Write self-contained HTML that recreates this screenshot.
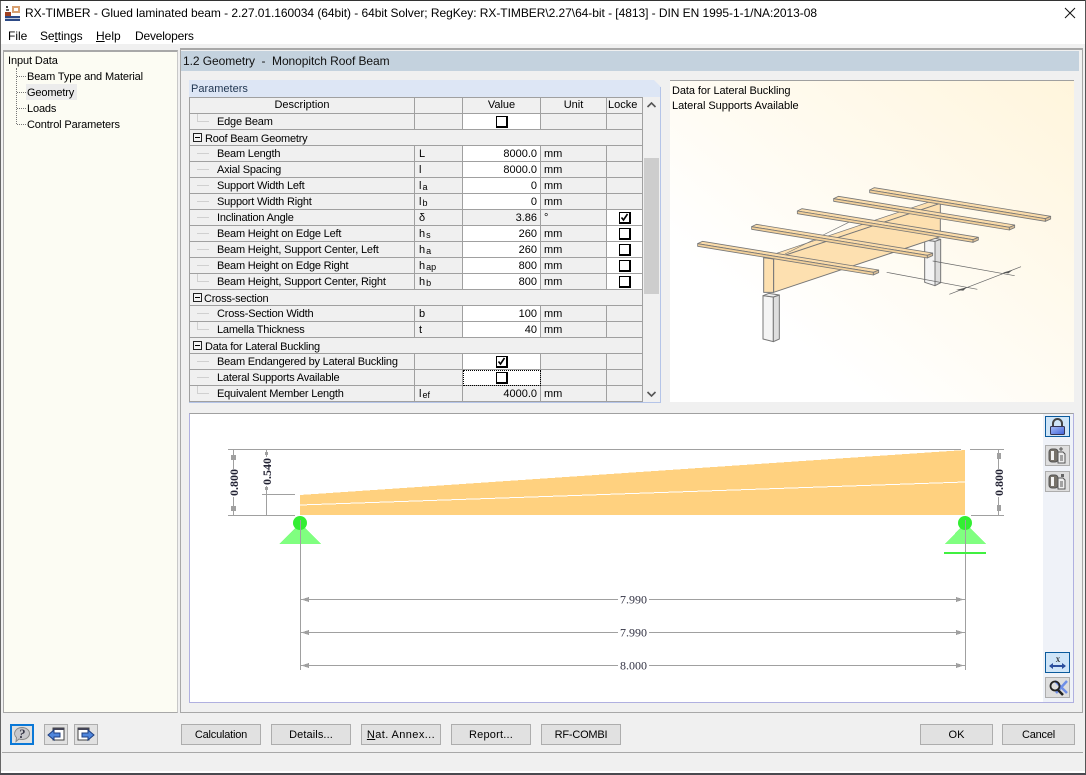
<!DOCTYPE html>
<html><head><meta charset="utf-8">
<style>
html,body{margin:0;padding:0;width:1086px;height:775px;overflow:hidden;background:#f0f0f0;font-family:"Liberation Sans",sans-serif;font-size:11px;color:#000}
.a{position:absolute}
.t{position:absolute;white-space:pre;line-height:16px;height:16px}
table{border-collapse:separate;border-spacing:0;table-layout:fixed;width:453px}
td{box-sizing:border-box;height:16px;padding:2px 0 0;border-right:1px solid #a0a0a0;border-bottom:1px solid #a0a0a0;background:#f0f0f0;line-height:13px;font-size:11px;white-space:nowrap;overflow:hidden;position:relative;vertical-align:top}
td.h{text-align:center;padding-top:0;line-height:15px}
td.l{padding-left:27px;letter-spacing:-.2px}
td.l::before{content:"";position:absolute;left:7px;top:7px;width:12px;height:1px;background:#d0d0d0}
td.e::after{content:"";position:absolute;left:7px;top:0;width:1px;height:8px;background:#d0d0d0}
td.g{padding-left:15px;padding-top:3px;line-height:12px;letter-spacing:-.22px}
td.g i{position:absolute;left:3px;top:3px;width:9px;height:9px;box-sizing:border-box;border:1px solid #222;background:#f4f4f4}
td.g i::after{content:"";position:absolute;left:1px;top:3px;width:5px;height:1px;background:#000}
td.s{padding-left:4px}
td.s sub{font-size:9px;vertical-align:baseline;position:relative;top:1px;margin-left:1px;line-height:0}
td.v{background:#fff;text-align:right;padding-right:3px}
td.d{text-align:right;padding-right:3px}
td.u{padding-left:3px}
td.w{background:#fff}
.cb{position:absolute;left:50%;margin-left:-6px;top:2px;width:12px;height:12px;box-sizing:border-box;border:1px solid #000;border-right:2px solid #000;border-bottom:2px solid #000;background:#fff}
.cb svg{position:absolute;left:0;top:0}
.btn{position:absolute;box-sizing:border-box;height:21px;top:724px;border:1px solid #adadad;background:#e1e1e1;text-align:center;line-height:21px;font-size:11px;width:80px}
.ib{position:absolute;box-sizing:border-box;width:24px;height:21px;border:1px solid #adadad;background:#e1e1e1}
.ib svg{position:absolute;left:0;top:0}
.ts{position:absolute;left:1045px;width:25px;height:21px;box-sizing:border-box;border:1px solid #adadad;background:#dedede}
.ts svg{position:absolute;left:0;top:0}
u{text-decoration:underline}
</style></head><body>

<!-- window chrome -->
<div class="a" style="left:0;top:0;width:1086px;height:1px;background:#333"></div>
<div class="a" style="left:0;top:1px;width:1px;height:772px;background:#666"></div>
<div class="a" style="left:1085px;top:0;width:1px;height:773px;background:#555"></div>
<div class="a" style="left:1px;top:1px;width:1084px;height:43px;background:#fff"></div>
<div class="a" style="left:1px;top:771px;width:1084px;height:2px;background:#fff"></div>
<div class="a" style="left:0;top:773px;width:1086px;height:2px;background:#4a4a50"></div>

<!-- title icon -->
<svg class="a" style="left:3px;top:4px" width="18" height="18" viewBox="0 0 18 18" shape-rendering="crispEdges">
<rect x="2" y="12" width="15" height="5" fill="#2d4a86"/><rect x="2" y="14" width="15" height="1" fill="#c0c8d8"/>
<rect x="9" y="2" width="8" height="7" fill="#d8a070"/><rect x="11" y="4" width="4" height="3" fill="#fff"/>
<rect x="2" y="8" width="6" height="4" fill="#a04020"/><rect x="3" y="2" width="2" height="2" fill="#444"/><rect x="3" y="5" width="3" height="2" fill="#666"/>
</svg>
<div class="t" style="left:25px;top:5px;font-size:12px;letter-spacing:-.05px">RX-TIMBER - Glued laminated beam - 2.27.01.160034 (64bit) - 64bit Solver; RegKey: RX-TIMBER\2.27\64-bit - [4813] - DIN EN 1995-1-1/NA:2013-08</div>
<svg class="a" style="left:1064px;top:7px" width="12" height="12"><path d="M1 1L11 11M11 1L1 11" stroke="#111" stroke-width="1" fill="none"/></svg>
<div class="t" style="left:8px;top:28px;font-size:12px">File</div>
<div class="t" style="left:40px;top:28px;font-size:12px;letter-spacing:-.1px">Se<u>t</u>tings</div>
<div class="t" style="left:96px;top:28px;font-size:12px"><u>H</u>elp</div>
<div class="t" style="left:135px;top:28px;font-size:12px;letter-spacing:-.2px">Developers</div>

<!-- left tree -->
<div class="a" style="left:3px;top:50px;width:175px;height:663px;box-sizing:border-box;background:#fcfcf3;border-top:2px solid #a8a8a8;border-left:1px solid #a8a8a8;border-bottom:1px solid #a8a8a8;border-right:1px solid #c8c8c8"></div>
<div class="a" style="left:26px;top:84px;width:51px;height:16px;background:#ececec"></div>
<div class="a" style="left:16px;top:68px;width:0;height:56px;border-left:1px dotted #777"></div>
<div class="a" style="left:17px;top:76px;width:9px;border-top:1px dotted #777"></div>
<div class="a" style="left:17px;top:92px;width:9px;border-top:1px dotted #777"></div>
<div class="a" style="left:17px;top:108px;width:9px;border-top:1px dotted #777"></div>
<div class="a" style="left:17px;top:124px;width:9px;border-top:1px dotted #777"></div>
<div class="t" style="left:8px;top:53px;letter-spacing:-.1px">Input Data</div>
<div class="t" style="left:27px;top:69px;letter-spacing:-.14px">Beam Type and Material</div>
<div class="t" style="left:27px;top:85px;letter-spacing:-.14px">Geometry</div>
<div class="t" style="left:27px;top:101px;letter-spacing:-.14px">Loads</div>
<div class="t" style="left:27px;top:117px;letter-spacing:-.14px">Control Parameters</div>

<!-- right panel -->
<div class="a" style="left:180px;top:48px;width:903px;height:665px;box-sizing:border-box;border-top:2px solid #a8a8a8;border-left:1px solid #a8a8a8;border-right:1px solid #a8a8a8;border-bottom:1px solid #a8a8a8"></div>
<div class="a" style="left:181px;top:51px;width:898px;height:20px;background:#c4d2de"></div>
<div class="t" style="left:183px;top:53px;font-size:12px;color:#111;letter-spacing:-.06px">1.2 Geometry  -  Monopitch Roof Beam</div>

<!-- parameters -->
<div class="a" style="left:189px;top:80px;width:472px;height:17px;background:#dde6f5;clip-path:polygon(0 0,465px 0,472px 7px,472px 17px,0 17px)"></div>
<div class="t" style="left:191px;top:81px;color:#1f3550">Parameters</div>
<div class="a" style="left:660px;top:87px;width:1px;height:316px;background:#b4c4e8"></div>
<div class="a" style="left:189px;top:402px;width:472px;height:1px;background:#b4c4e8"></div>

<div class="a" style="left:189px;top:97px;border-top:1px solid #a0a0a0;border-left:1px solid #a0a0a0;width:453px">
<table><colgroup><col style="width:225px"><col style="width:48px"><col style="width:78px"><col style="width:66px"><col style="width:36px"></colgroup>
<tr><td class="h">Description</td><td></td><td class="h">Value</td><td class="h">Unit</td><td class="h" style="text-align:left;padding-left:1px">Locke</td></tr>
<tr><td class="l e">Edge Beam</td><td></td><td class="w"><span class="cb"></span></td><td></td><td></td></tr>
<tr><td class="g" colspan="5"><i></i>Roof Beam Geometry</td></tr>
<tr><td class="l">Beam Length</td><td class="s">L</td><td class="v">8000.0</td><td class="u">mm</td><td></td></tr>
<tr><td class="l">Axial Spacing</td><td class="s">l</td><td class="v">8000.0</td><td class="u">mm</td><td></td></tr>
<tr><td class="l">Support Width Left</td><td class="s">l<sub>a</sub></td><td class="v">0</td><td class="u">mm</td><td></td></tr>
<tr><td class="l">Support Width Right</td><td class="s">l<sub>b</sub></td><td class="v">0</td><td class="u">mm</td><td></td></tr>
<tr><td class="l">Inclination Angle</td><td class="s">δ</td><td class="d">3.86</td><td class="u">°</td><td class="w"><span class="cb"><svg width="9" height="9"><path d="M1.500 4.500L3.500 7L7.500 1" stroke="#000" stroke-width="1.600" fill="none"/></svg></span></td></tr>
<tr><td class="l">Beam Height on Edge Left</td><td class="s">h<sub>s</sub></td><td class="v">260</td><td class="u">mm</td><td class="w"><span class="cb"></span></td></tr>
<tr><td class="l">Beam Height, Support Center, Left</td><td class="s">h<sub>a</sub></td><td class="v">260</td><td class="u">mm</td><td class="w"><span class="cb"></span></td></tr>
<tr><td class="l">Beam Height on Edge Right</td><td class="s">h<sub>ap</sub></td><td class="v">800</td><td class="u">mm</td><td class="w"><span class="cb"></span></td></tr>
<tr><td class="l e">Beam Height, Support Center, Right</td><td class="s">h<sub>b</sub></td><td class="v">800</td><td class="u">mm</td><td class="w"><span class="cb"></span></td></tr>
<tr><td class="g" colspan="5" style="padding-left:14px"><i></i>Cross-section</td></tr>
<tr><td class="l">Cross-Section Width</td><td class="s">b</td><td class="v">100</td><td class="u">mm</td><td></td></tr>
<tr><td class="l e">Lamella Thickness</td><td class="s">t</td><td class="v">40</td><td class="u">mm</td><td></td></tr>
<tr><td class="g" colspan="5"><i></i>Data for Lateral Buckling</td></tr>
<tr><td class="l">Beam Endangered by Lateral Buckling</td><td></td><td class="w"><span class="cb"><svg width="9" height="9"><path d="M1.500 4.500L3.500 7L7.500 1" stroke="#000" stroke-width="1.600" fill="none"/></svg></span></td><td></td><td></td></tr>
<tr><td class="l">Lateral Supports Available</td><td></td><td class="w" style="outline:1px dotted #000;outline-offset:-1px"><span class="cb"></span></td><td></td><td></td></tr>
<tr><td class="l e">Equivalent Member Length</td><td class="s">l<sub>ef</sub></td><td class="d">4000.0</td><td class="u">mm</td><td></td></tr>
</table></div>

<!-- scrollbar -->
<div class="a" style="left:644px;top:158px;width:15px;height:136px;background:#cdcdcd"></div>
<svg class="a" style="left:646px;top:100px" width="11" height="10"><path d="M1.500 7L5.500 3L9.500 7" stroke="#555" stroke-width="1.600" fill="none"/></svg>
<svg class="a" style="left:646px;top:389px" width="11" height="10"><path d="M1.500 3L5.500 7L9.500 3" stroke="#555" stroke-width="1.600" fill="none"/></svg>

<!-- picture -->
<div class="a" style="left:670px;top:80px;width:404px;height:322px;box-sizing:border-box;border-top:1px solid #a0a0a0;background:linear-gradient(to top right,#ffffff 25%,#fff5dc 100%)"></div>
<div class="t" style="left:672px;top:83px;letter-spacing:-.08px">Data for Lateral Buckling</div>
<div class="t" style="left:672px;top:98px;letter-spacing:-.04px">Lateral Supports Available</div>
<svg class="a" style="left:670px;top:80px" width="410" height="325" viewBox="0 0 1230 975" stroke-linejoin="round">
<g stroke="#777" stroke-width="3">
<path d="M764 480L795 484V617L764 607Z" fill="#f4f4f4"/><path d="M795 484L812 478V608L795 617Z" fill="#dedede"/><path d="M764 480L781 472L812 478L795 484Z" fill="#eee"/>
<path d="M279 647L310 651V785L279 777Z" fill="#f4f4f4"/><path d="M310 651L328 645V777L310 785Z" fill="#dedede"/><path d="M279 647L297 640L328 645L310 651Z" fill="#eee"/>
<path d="M281 533L311 537V637L281 637Z" fill="#fde0b0"/>
<path d="M281 533L780 365L811 370L311 537Z" fill="#fde0b0" stroke-width="2"/>
<path d="M311 537L811 370V470L311 637Z" fill="#fde0b0"/>
<path d="M345 522L540 425" fill="none" stroke-width="2"/>
</g>
<g stroke="#777" stroke-width="2.500">
<g><path d="M83 491L97 484L626 570L610 577Z" fill="#fbdcaa"/><path d="M83 491L610 577V585L83 499Z" fill="#f2d09a"/><path d="M610 577L626 570V578L610 585Z" fill="#d8bd96"/></g>
<g transform="translate(162,-51)"><path d="M83 491L97 484L626 570L610 577Z" fill="#fbdcaa"/><path d="M83 491L610 577V585L83 499Z" fill="#f2d09a"/><path d="M610 577L626 570V578L610 585Z" fill="#d8bd96"/></g>
<g transform="translate(299,-98)"><path d="M83 491L97 484L626 570L610 577Z" fill="#fbdcaa"/><path d="M83 491L610 577V585L83 499Z" fill="#f2d09a"/><path d="M610 577L626 570V578L610 585Z" fill="#d8bd96"/></g>
<g transform="translate(408,-135)"><path d="M83 491L97 484L626 570L610 577Z" fill="#fbdcaa"/><path d="M83 491L610 577V585L83 499Z" fill="#f2d09a"/><path d="M610 577L626 570V578L610 585Z" fill="#d8bd96"/></g>
<g transform="translate(516,-161)"><path d="M83 491L97 484L626 570L610 577Z" fill="#fbdcaa"/><path d="M83 491L610 577V585L83 499Z" fill="#f2d09a"/><path d="M610 577L626 570V578L610 585Z" fill="#d8bd96"/></g>
</g>
<g stroke="#666" stroke-width="2" fill="none"><path d="M650 577L922 628M788 543L1034 587M838 643L1053 560"/></g>
<path d="M858 630L890 622L880 632ZM998 578L1028 570L1015 580Z" fill="#555"/>
</svg>

<!-- graphic -->
<div class="a" style="left:189px;top:413px;width:885px;height:290px;box-sizing:border-box;background:#fff;border-top:1px solid #a0a0a0;border-left:1px solid #b0b0e0;border-right:1px solid #b0b0e0;border-bottom:1px solid #b0b0e0"></div>
<div class="a" style="left:1043px;top:414px;width:30px;height:288px;background:#eff2f8"></div>
<svg class="a" style="left:0;top:0" width="1086" height="775">
<g shape-rendering="crispEdges">
<path d="M300 495L965 450V515H300Z" fill="#ffd17f"/>
<path d="M300 505L965 482" stroke="#fff" stroke-width="1" fill="none"/>
<g stroke="#a0a0a0" stroke-width="1" fill="none">
<path d="M228 449.500H961M970 449.500H1004M228 515.500H295M971 515.500H1004M262 494.500H295"/>
<path d="M233.500 450V469M233.500 497V515M266.500 450V457M266.500 486V515M998.500 450V469M998.500 497V515"/>
<path d="M300.500 516V670M965.500 516V670"/>
<path d="M300 599.500H618M649 599.500H965M300 632.500H618M649 632.500H965M300 665.500H618M649 665.500H965"/>
</g>
<g fill="#a0a0a0">
<rect x="231" y="455" width="5" height="5"/><rect x="231" y="506" width="5" height="5"/>
<rect x="265" y="452" width="3" height="3"/><rect x="265" y="487" width="3" height="3"/>
<rect x="997" y="453" width="4" height="6"/><rect x="997" y="505" width="4" height="6"/>
<path d="M301 599.500L309 597V602ZM964 599.500L956 597V602ZM301 632.500L309 630V635ZM964 632.500L956 630V635ZM301 665.500L309 663V668ZM964 665.500L956 663V668Z"/>
</g>
<path d="M279 544L300 523L321 544ZM945 544L965 523L986 544Z" fill="#80ff80"/>
<rect x="944" y="552" width="42" height="2" fill="#40f040"/>
</g>
<circle cx="300" cy="523" r="7" fill="#33ee33"/><circle cx="965" cy="523" r="7" fill="#33ee33"/>
<path d="M300.500 520V545M965.500 520V545" stroke="#a0a0a0" fill="none"/>
<g font-family="Liberation Serif,serif" font-size="12" fill="#223" text-anchor="middle" font-weight="bold">
<text transform="translate(238,482.500) rotate(-90)">0.800</text>
<text transform="translate(271,471.500) rotate(-90)">0.540</text>
<text transform="translate(1003,482.500) rotate(-90)">0.800</text>
</g>
<g font-family="Liberation Serif,serif" font-size="12" fill="#334" text-anchor="middle">
<text x="633.500" y="603.500">7.990</text>
<text x="633.500" y="636.500">7.990</text>
<text x="633.500" y="669.500">8.000</text>
</g>
</svg>

<!-- graphic toolbar -->
<div class="ts" style="top:416px;border:1px solid #0a5a9c;background:#cfe5f8"><svg width="23" height="19"><defs><linearGradient id="lk" x1="0" y1="0" x2="1" y2="1"><stop offset="0" stop-color="#a8c0f8"/><stop offset="1" stop-color="#3f5fd8"/></linearGradient></defs><path d="M7 10V6.500a4.500 4.500 0 0 1 9 0V10" stroke="#444" stroke-width="2" fill="none"/><rect x="4.500" y="9.500" width="14" height="8" rx="1" fill="url(#lk)" stroke="#335"/></svg></div>
<div class="ts" style="top:445px"><svg width="23" height="19"><rect x="3" y="3" width="9" height="13" rx="3" fill="#77726a" stroke="#555"/><rect x="5" y="5" width="3" height="9" fill="#f4f4f4"/><path d="M12 6h5l2 2v9h-7z" fill="#eee" stroke="#555"/><path d="M14 10h3M14 12h3M14 14h3" stroke="#555"/><path d="M15 1v4M13 3h4" stroke="#555"/></svg></div>
<div class="ts" style="top:471px"><svg width="23" height="19"><rect x="3" y="3" width="9" height="13" rx="3" fill="#77726a" stroke="#555"/><rect x="5" y="5" width="3" height="9" fill="#f4f4f4"/><path d="M12 6h5l2 2v9h-7z" fill="#eee" stroke="#555"/><path d="M14 10h3M14 12h3M14 14h3" stroke="#555"/><rect x="15" y="2" width="3" height="3" fill="#666"/></svg></div>
<div class="ts" style="top:652px;border:1px solid #0a5a9c;background:#cfe5f8"><svg width="23" height="19"><text x="12" y="9" font-family="Liberation Serif,serif" font-size="9" text-anchor="middle">x</text><path d="M4 13H19" stroke="#2b4f9e" stroke-width="2"/><path d="M3 13L7 10V16ZM20 13L16 10V16Z" fill="#2b4f9e"/></svg></div>
<div class="ts" style="top:677px"><svg width="23" height="19"><path d="M9 3L21 15M21 3L10 15" stroke="#6f8fe8" stroke-width="2.500" fill="none"/><circle cx="9" cy="8" r="4.500" fill="none" stroke="#222" stroke-width="1.800"/><path d="M12 12L17 17" stroke="#222" stroke-width="2.500"/></svg></div>

<!-- bottom -->
<div class="ib" style="left:10px;top:724px;border:2px solid #0a78d7;background:#e1e1e1"><svg width="20" height="17"><path d="M10 1.500a7.500 6 0 0 1 0 12c-1 0-2 0-3-.500L4 15.500L4.500 11.500A7.500 6 0 0 1 10 1.500Z" fill="#c8c8cc" stroke="#888"/><text x="10" y="12" font-family="Liberation Serif,serif" font-style="italic" font-weight="bold" font-size="13" text-anchor="middle" fill="#334">?</text></svg></div>
<div class="ib" style="left:44px;top:724px"><svg width="22" height="19"><rect x="8" y="3" width="11" height="12" fill="#fff" stroke="#444"/><rect x="8" y="3" width="11" height="2" fill="#445"/><path d="M3 10L9 5V8H15V12H9V15Z" fill="#4f86dc" stroke="#1f3f80"/></svg></div>
<div class="ib" style="left:74px;top:724px"><svg width="22" height="19"><rect x="3" y="3" width="11" height="12" fill="#fff" stroke="#444"/><rect x="3" y="3" width="11" height="2" fill="#445"/><path d="M19 10L13 5V8H7V12H13V15Z" fill="#4f86dc" stroke="#1f3f80"/></svg></div>

<div class="btn" style="left:181px;letter-spacing:-.2px">Calculation</div>
<div class="btn" style="left:271px;letter-spacing:.1px">Details...</div>
<div class="btn" style="left:361px;letter-spacing:.4px"><u>N</u>at. Annex...</div>
<div class="btn" style="left:451px;letter-spacing:.2px">Report...</div>
<div class="btn" style="left:541px;letter-spacing:-.2px">RF-COMBI</div>
<div class="btn" style="left:920px;width:73px">OK</div>
<div class="btn" style="left:1002px;width:73px;letter-spacing:-.2px">Cancel</div>
<div class="a" style="left:2px;top:752px;width:1081px;height:1px;background:#a8a8a8"></div>
</body></html>
